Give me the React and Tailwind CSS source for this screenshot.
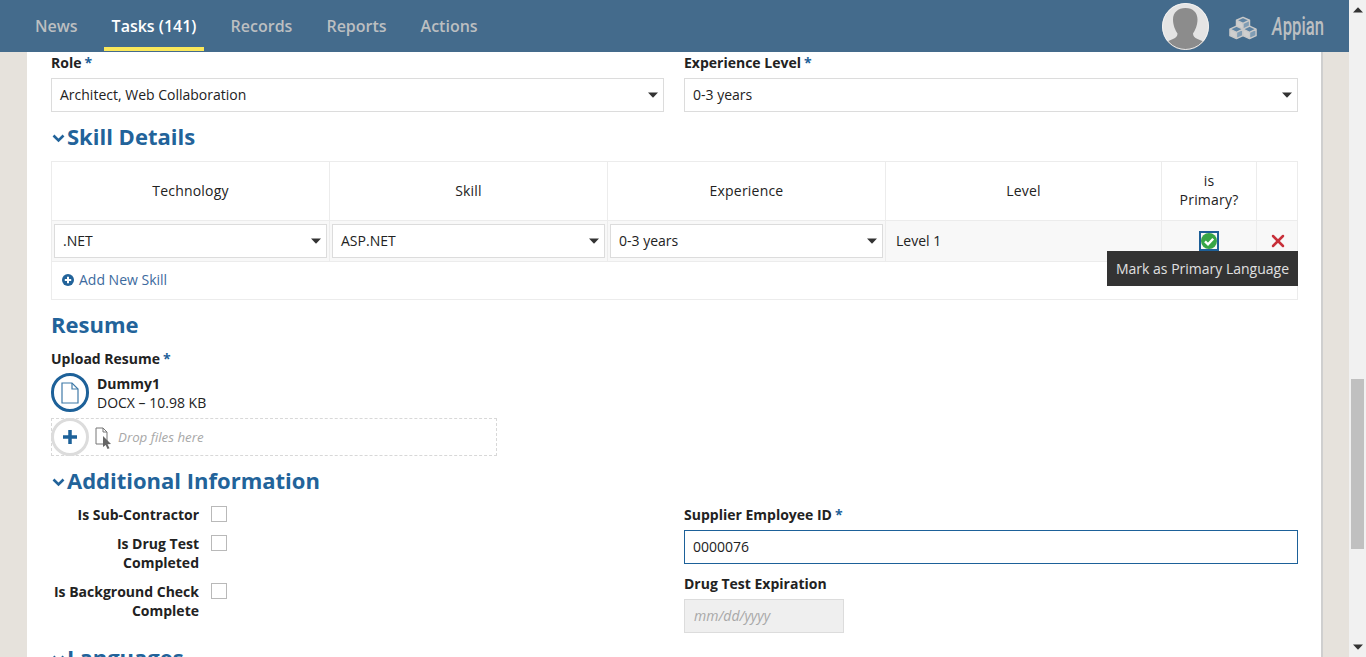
import { X } from 'lucide-react';

const font = { fontFamily: '"Open Sans", sans-serif' };

const Caret = ({ className = '' }) => (
    <svg width="10" height="6" viewBox="0 0 10 6" className={className}>
        <path d="M0 0.5h10L5 5.8z" fill="#333" />
    </svg>
);

const Req = () => <span className="text-[#1d6199] ml-[3px]">*</span>;

const Label = ({ children, required }) => (
    <div className="text-sm font-bold leading-5 text-[#222]">
        {children}
        {required && <Req />}
    </div>
);

const Select = ({ value, className = '' }) => (
    <div className={`h-[34px] flex items-center justify-between bg-white border border-[#dcdcdc] pl-2 pr-[5px] text-sm text-[#222] ${className}`}>
        <span>{value}</span>
        <Caret />
    </div>
);

const Heading = ({ children, chevron }) => (
    <div className="flex items-center h-[30px] pb-[2px] text-[22px] font-bold text-[#22639a]">
        {chevron && (
            <svg width="13" height="9" viewBox="0 0 13 9" className="ml-[1px] mr-[2px] mt-[5px]">
                <path d="M1.500 1.500l5 5 5-5" fill="none" stroke="#22639a" strokeWidth="2.600" />
            </svg>
        )}
        {children}
    </div>
);

const CheckRow = ({ lines, className = '' }) => (
    <div className={`flex ${className}`}>
        <div className="w-[148px] text-right text-sm font-bold leading-[19px] text-[#222]">
            {lines.map((l) => (
                <div key={l}>{l}</div>
            ))}
        </div>
        <div className="w-4 h-4 ml-3 mt-[1px] bg-white border border-[#b9b9b9]" />
    </div>
);

const Cube = ({ x, y }) => (
    <g transform={`translate(${x} ${y})`}>
        <path d="M0 3.200L7 0l7 3.200v7L7 13.400 0 10.200z" fill="#cfcfcf" />
        <path d="M7 6.600l7-3.400v7L7 13.400z" fill="#7f9cb4" />
        <path d="M0 3.200L7 0l7 3.200-7 3.400z" fill="#5d83a3" />
        <path d="M0 3.200L7 0l7 3.200v7L7 13.400 0 10.200zM0 3.200l7 3.400 7-3.400M7 6.600v6.800" fill="none" stroke="#c9c9c9" strokeWidth="1.500" strokeLinejoin="round" />
    </g>
);

const Cubes = () => (
    <svg width="28" height="24" viewBox="0 0 30 25">
        <Cube x={8} y={1} />
        <Cube x={1} y={10.500} />
        <Cube x={15} y={10.500} />
    </svg>
);

const Avatar = () => (
    <svg width="47" height="47" viewBox="0 0 47 47">
        <defs>
            <clipPath id="avatarClip">
                <circle cx="23.500" cy="23.500" r="23.500" />
            </clipPath>
        </defs>
        <g clipPath="url(#avatarClip)">
            <rect width="47" height="47" fill="#e4e4e4" />
            <path d="M23.500 5c7.500 0 12 4.500 12 11.500 0 6-2.500 11-4.500 14 0 2.500 1.500 4.500 4.500 5.500l7 3v9H4v-9l7-3c3-1 4.500-3 4.500-5.500-2-3-4.500-8-4.500-14C11 9.500 16 5 23.500 5z" fill="#8c8c8c" />
            <circle cx="23.500" cy="23.500" r="23" fill="none" stroke="#f2f2f2" strokeWidth="1" />
        </g>
    </svg>
);

const Th = ({ className = '', children }) => (
    <div className={`flex items-center justify-center text-center text-sm tracking-[0.2px] pb-[2px] leading-[19px] text-[#222] border-r border-[#ececec] ${className}`}>
        {children}
    </div>
);

const App = () => {
    return (
        <div style={font} className="flex h-[657px] w-[1366px] overflow-hidden bg-[#e6e2dc]">
            <div className="w-[1349px] h-full flex flex-col overflow-hidden">
                <header className="h-[52px] shrink-0 bg-[#446b8c] flex items-center pl-[18px] pr-[27px]">
                    <nav className="flex h-full text-base font-semibold text-[#bcbfc1]">
                        <div className="px-[17px] flex items-center">News</div>
                        <div className="px-2 ml-[9px] mr-[10px] flex items-center text-white border-b-[4px] border-[#fbe85a] h-[51px] pt-[4px] w-[100px] whitespace-nowrap">Tasks (141)</div>
                        <div className="px-[17px] flex items-center">Records</div>
                        <div className="px-[17px] flex items-center">Reports</div>
                        <div className="px-[17px] flex items-center">Actions</div>
                    </nav>
                    <div className="ml-auto flex items-center">
                        <Avatar />
                        <div className="ml-5 mt-[3px]"><Cubes /></div>
                        <span className="ml-[15px] w-[50px] origin-left scale-x-[0.64] text-[26px] font-medium leading-none text-[#bcbfc1] whitespace-nowrap" style={{ fontFamily: '"Roboto", sans-serif' }}><span className="italic">A</span>ppian</span>
                    </div>
                </header>

                <main className="ml-[27px] w-[1296px] flex-1 bg-white border-r-2 border-[#cfcfcf] pl-6 pr-6 overflow-hidden">
                    <div className="w-[1247px]">
                        <div className="grid grid-cols-[613px_614px] gap-x-5 pt-[1px]">
                            <div>
                                <div className="h-[19px]"><Label required>Role</Label></div>
                                <Select className="mt-[6px]" value="Architect, Web Collaboration" />
                            </div>
                            <div>
                                <div className="h-[19px]"><Label required>Experience Level</Label></div>
                                <Select className="mt-[6px]" value="0-3 years" />
                            </div>
                        </div>

                        <div className="mt-[10px]"><Heading chevron>Skill Details</Heading></div>

                        <div className="mt-[9px] border border-[#ececec] relative">
                            <div className="grid grid-cols-[278px_278px_278px_276px_95px_41px] h-[58px]">
                                <Th>Technology</Th>
                                <Th>Skill</Th>
                                <Th>Experience</Th>
                                <Th>Level</Th>
                                <Th>is<br />Primary?</Th>
                                <Th className="border-r-0" />
                            </div>
                            <div className="grid grid-cols-[278px_278px_278px_276px_95px_41px] h-[42px] bg-[#f8f8f8] border-y border-[#ececec] text-sm text-[#222]">
                                <div className="border-r border-[#ececec] px-[2px] pt-[3px]"><Select value=".NET" /></div>
                                <div className="border-r border-[#ececec] px-[2px] pt-[3px]"><Select value="ASP.NET" /></div>
                                <div className="border-r border-[#ececec] px-[2px] pt-[3px]"><Select value="0-3 years" /></div>
                                <div className="border-r border-[#ececec] pl-[10px] flex items-center">Level 1</div>
                                <div className="border-r border-[#ececec] flex items-center justify-center">
                                    <div className="w-5 h-5 border-2 border-[#1d5f97] flex items-center justify-center">
                                        <svg width="16" height="16" viewBox="0 0 16 16">
                                            <circle cx="8" cy="8" r="8" fill="#36a546" />
                                            <path d="M4 8.300l3 3 5.200-5.600" fill="none" stroke="#fff" strokeWidth="2.400" />
                                        </svg>
                                    </div>
                                </div>
                                <div className="flex items-center justify-center">
                                    <X size={20} strokeWidth={3} className="text-[#c8303a]" />
                                </div>
                            </div>
                            <div className="h-[37px] flex items-center pl-[10px] pb-[1px] text-sm text-[#3d6a9e]">
                                <svg width="12" height="12" viewBox="0 0 12 12" className="mr-[5px]">
                                    <circle cx="6" cy="6" r="6" fill="#22639a" />
                                    <path d="M6 2.800v6.400M2.800 6h6.400" stroke="#fff" strokeWidth="2" />
                                </svg>
                                Add New Skill
                            </div>
                            <div className="absolute left-[1055px] top-[89px] h-[35px] w-[191px] bg-[#333] text-[#e0e0e0] text-sm flex items-center justify-center whitespace-nowrap">
                                Mark as Primary Language
                            </div>
                        </div>

                        <div className="mt-[10px]"><Heading>Resume</Heading></div>
                        <div className="mt-[9px]"><Label required>Upload Resume</Label></div>

                        <div className="flex mt-[4px] h-[39px]">
                            <div className="w-[38px] h-[39px] rounded-full border-[3px] border-[#1d6199] flex items-center justify-center">
                                <svg width="18" height="22" viewBox="0 0 18 22" fill="none" stroke="#3f7aa8" strokeWidth="1.200">
                                    <path d="M1 1h10l6 6v14H1z" />
                                    <path d="M11 1v6h6" />
                                </svg>
                            </div>
                            <div className="ml-2 text-sm leading-[19px] text-[#222] pt-[1px]">
                                <div className="font-bold">Dummy1</div>
                                <div>DOCX – 10.98 KB</div>
                            </div>
                        </div>

                        <div className="relative flex items-center h-[38px] w-[446px] mt-[6px] border border-dashed border-[#d8d8d8]">
                            <div className="absolute -left-[1px] -top-[1px] w-[38px] h-[38px] rounded-full bg-white border-[3px] border-[#dcdcdc] flex items-center justify-center">
                                <svg width="16" height="16" viewBox="0 0 16 16">
                                    <path d="M8 1v14M1 8h14" stroke="#1d6199" strokeWidth="3.500" />
                                </svg>
                            </div>
                            <svg width="18" height="22" viewBox="0 0 18 22" className="ml-[43px] mt-[1px]">
                                <path d="M1 1h7l4 4v12H1z" fill="none" stroke="#777" strokeWidth="1" />
                                <path d="M8 1v4h4" fill="none" stroke="#777" strokeWidth="1" />
                                <path d="M8 9l8 8-3.500.2 2 4-2 .8-1.800-4L8 20z" fill="#666" />
                            </svg>
                            <span className="ml-[5px] pt-[2px] text-[13.300px] italic text-[#a8a8a8]">Drop files here</span>
                        </div>

                        <div className="mt-[10px]"><Heading chevron>Additional Information</Heading></div>

                        <div className="grid grid-cols-[613px_614px] gap-x-5 mt-[9px]">
                            <div>
                                <CheckRow lines={['Is Sub-Contractor']} />
                                <CheckRow className="mt-[10px]" lines={['Is Drug Test', 'Completed']} />
                                <CheckRow className="mt-[10px]" lines={['Is Background Check', 'Complete']} />
                            </div>
                            <div>
                                <Label required>Supplier Employee ID</Label>
                                <div className="mt-[5px] h-[34px] border border-[#1d6199] flex items-center pl-2 text-sm text-[#222]">0000076</div>
                                <div className="mt-[10px]"><Label>Drug Test Expiration</Label></div>
                                <div className="mt-[5px] h-[34px] w-[160px] bg-[#efefef] border border-[#dcdcdc] flex items-center pl-[9px] text-sm italic text-[#a8a8a8]">mm/dd/yyyy</div>
                            </div>
                        </div>

                        <div className="mt-[10px]"><Heading chevron>Languages</Heading></div>
                    </div>
                </main>
            </div>

            <aside className="relative w-[17px] h-full bg-[#f1f1f1] flex flex-col items-center justify-between py-[7px]">
                <Caret className="rotate-180" />
                <div className="absolute left-[2px] top-[379px] w-[13px] h-[170px] bg-[#c0c0c0]" />
                <Caret />
            </aside>
        </div>
    );
};

export default App;
